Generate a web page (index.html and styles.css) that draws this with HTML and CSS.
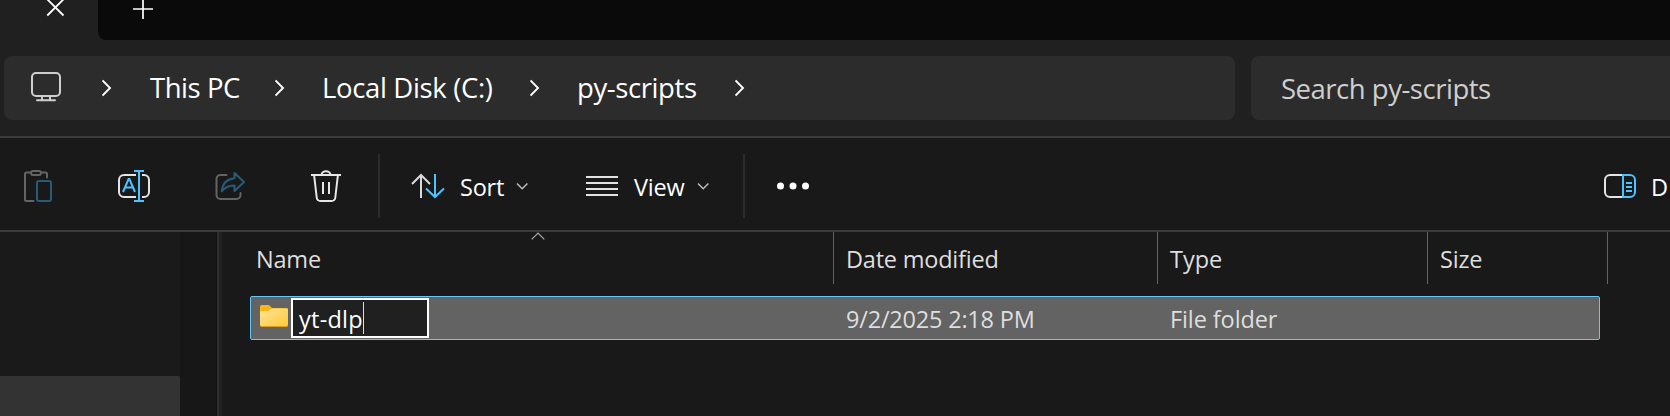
FILE: index.html
```html
<!DOCTYPE html>
<html lang="en">
<head>
<meta charset="utf-8">
<title>py-scripts</title>
<link rel="stylesheet" href="styles.css">
</head>
<body>
<div class="explorer">
  <div class="tabs">
    <div class="tab-active">
      <svg class="icon" width="98" height="40" viewBox="0 0 98 40"><path d="M47.3-.7 63.5 15.5M63.5-.7 47.3 15.5" stroke="#fff" stroke-width="1.8"/></svg>
    </div>
    <div class="tab-strip">
      <svg class="icon" width="90" height="40" viewBox="98 0 90 40"><path d="M133 9h20M143-1v20" stroke="#fff" stroke-width="1.7"/></svg>
    </div>
  </div>
  <div class="navigation">
    <div class="address">
      <svg class="icon" width="71" height="64" viewBox="31 56 71 64"><g fill="none" stroke="#cfcfcf" stroke-width="2" stroke-linecap="round"><rect x="32" y="73" width="28" height="23" rx="4"/><path d="M42 96v4M50 96v4M37 100.3h18"/></g></svg>
      <svg class="icon crumb-arrow" viewBox="0 0 14 64"><path d="M.5 24.500l7.500 7.500-7.500 7.500"/></svg>
      <span class="crumb pc">This PC</span>
      <svg class="icon crumb-arrow" viewBox="0 0 14 64"><path d="M.5 24.500l7.500 7.500-7.500 7.500"/></svg>
      <span class="crumb disk">Local Disk (C:)</span>
      <svg class="icon crumb-arrow" viewBox="0 0 14 64"><path d="M.5 24.500l7.500 7.500-7.500 7.500"/></svg>
      <span class="crumb folder">py-scripts</span>
      <svg class="icon crumb-arrow" viewBox="0 0 14 64"><path d="M.5 24.500l7.500 7.500-7.500 7.500"/></svg>
    </div>
    <div class="search"><span>Search py-scripts</span></div>
  </div>
  <div class="toolbar">
    <div class="file-actions">
      <svg class="icon" width="30" height="92" viewBox="23 138 30 92"><g fill="none" stroke="#646464" stroke-width="2" stroke-linecap="round"><path d="M30 172.500h-3.500a1.500 1.500 0 0 0-1.500 1.500v25.500a1.500 1.500 0 0 0 1.500 1.500h7M42 172.500h3.500a1.500 1.500 0 0 1 1.500 1.500v3.500"/><rect x="31" y="171" width="10" height="4" rx="2"/><rect x="37" y="181" width="14" height="20" rx="2" stroke="#285b78"/></g></svg>
      <svg class="icon" width="34" height="92" viewBox="117 138 34 92"><g fill="none" stroke="#e4e4e4" stroke-width="2"><path d="M136 175h-12a5 5 0 0 0-5 5v12a5 5 0 0 0 5 5h12M142 175h2a5 5 0 0 1 5 5v12a5 5 0 0 1-5 5h-2"/><path d="M134 171h10M139 171v30M134 201h10M123 192l5.600-13h.8l5.600 13M125 187.500h8" stroke="#4cc2ff"/></g></svg>
      <svg class="icon" width="32" height="92" viewBox="214.500 138 32 92"><g fill="none" stroke-width="2" stroke-linecap="round" stroke-linejoin="round"><path d="M227 175h-6a4 4 0 0 0-4 4v16a4 4 0 0 0 4 4h16a4 4 0 0 0 4-4v-2" stroke="#646464"/><path d="M235 173l9.500 9-9.500 9v-5.500c-6 0-9.500 1.300-12.800 6C223 184 227.500 179 235 178.300z" stroke="#285b78"/></g></svg>
      <svg class="icon" width="32" height="92" viewBox="310 138 32 92"><g fill="none" stroke="#e8e8e8" stroke-width="2"><path d="M311 175h30M321.500 175c0-5 9-5 9 0M314.200 176l2.500 21.500a4 4 0 0 0 4 3.500h10.600a4 4 0 0 0 4-3.500l2.500-21.500M323 182v12M329 182v12"/></g></svg>
    </div>
    <div class="divider"></div>
    <div class="sort">
      <svg class="icon" width="34" height="92" viewBox="411 138 34 92"><g fill="none" stroke-width="2"><path d="M421 198v-23M412 184l9-9 9 9" stroke="#dadada"/><path d="M435 174v23M426 188.500l9 8.500 9-8.500" stroke="#4cc2ff"/></g></svg>
      <span class="label">Sort</span>
      <svg class="icon" width="14" height="92" viewBox="516 138 14 92"><path d="M517 183.500l5.200 5.200 5.200-5.200" fill="none" stroke="#bdbdbd" stroke-width="1.500"/></svg>
    </div>
    <div class="view">
      <svg class="icon" width="34" height="92" viewBox="585 138 34 92"><path d="M586 177h32M586 183h32M586 189h32M586 195h32" stroke="#e2e2e2" stroke-width="2"/></svg>
      <span class="label">View</span>
      <svg class="icon" width="14" height="92" viewBox="697 138 14 92"><path d="M698 183.500l5.200 5.200 5.200-5.200" fill="none" stroke="#bdbdbd" stroke-width="1.500"/></svg>
    </div>
    <div class="divider"></div>
    <svg class="icon more" width="36" height="92" viewBox="776 138 36 92"><g fill="#fff"><circle cx="780.500" cy="186" r="3.500"/><circle cx="793" cy="186" r="3.500"/><circle cx="805.500" cy="186" r="3.500"/></g></svg>
    <div class="details">
      <svg class="icon" width="34" height="92" viewBox="1603 138 34 92"><g fill="none" stroke-width="2"><path d="M1623 175h-13a5 5 0 0 0-5 5v12a5 5 0 0 0 5 5h13" stroke="#e4e4e4"/><path d="M1623 174v24M1623 175h7a5 5 0 0 1 5 5v12a5 5 0 0 1-5 5h-7M1626 183h6M1626 187h6M1626 191h6" stroke="#4cc2ff"/></g></svg>
      <span class="label">D</span>
    </div>
  </div>
  <div class="content">
    <div class="tree"><div class="tree-selected"></div></div>
    <div class="gutter"></div>
    <div class="splitter"></div>
    <div class="files">
      <div class="headers">
        <div class="header"><span class="name">Name</span><svg class="sort-mark" width="14" height="8" viewBox="0 0 14 8"><path d="M.7 7.300 7 1l6.300 6.300" fill="none" stroke="#aaa" stroke-width="1.200"/></svg></div>
        <div class="header"><span class="modified">Date modified</span></div>
        <div class="header"><span class="type">Type</span></div>
        <div class="header"><span class="size">Size</span></div>
      </div>
      <div class="row">
        <div class="row-name">
          <svg class="icon" width="28" height="42" viewBox="260 297 28 42"><defs><linearGradient id="folder" x1="0" y1="0" x2="1" y2="1"><stop offset="0" stop-color="#ffe59a"/><stop offset="1" stop-color="#ffc938"/></linearGradient></defs><path d="M260 313v-6.500q0-1.500 1.500-1.500h7.500l3 3h14.500q1.500 0 1.500 1.500v4z" fill="#f9b416"/><path d="M260 312q0-1 1-1h7.500l3-2.500H287q1 0 1 1V325q0 1-1 1h-26q-1 0-1-1z" fill="url(#folder)"/><path d="M260.500 326.500h27" stroke="#d69d22"/></svg>
          <div class="rename"><span>yt-dlp</span><i class="caret"></i></div>
        </div>
        <span class="date-value">9/2/2025 2:18 PM</span>
        <span class="type-value">File folder</span>
      </div>
    </div>
  </div>
</div>
</body>
</html>
```
FILE: styles.css
```css
* { box-sizing: border-box; }
body { margin: 0; background: #191919; color: #fff; font: 23.500px/30px "Open Sans", "Noto Sans", sans-serif; }
.explorer { width: 1670px; height: 416px; overflow: hidden; display: flex; flex-direction: column; white-space: nowrap; }
.icon { display: block; flex: none; }
.tabs { display: flex; height: 40px; background: #202020; }
.tab-active { width: 98px; }
.tab-strip { flex: 1; background: #0a0a0a; border-bottom-left-radius: 8px; }
.navigation { display: flex; gap: 16px; height: 98px; padding: 16px 0 16px 4px; background: #202020; border-bottom: 2px solid #3b3b3b; }
.address { width: 1231px; height: 64px; padding-left: 27px; display: grid; grid-template-columns: 71px 48px 125px 47px 208px 47px 158px 48px; border-radius: 8px; background: #2c2c2c; }
.crumb-arrow { width: 14px; height: 64px; fill: none; stroke: #fff; stroke-width: 1.900px; }
.crumb, .search { font-size: 27.500px; line-height: 64px; }
.pc { letter-spacing: -.450px; }
.disk { letter-spacing: -.350px; }
.folder { letter-spacing: -.400px; }
.search { flex: 1; padding: 1px 0 0 30px; border-radius: 8px 0 0 8px; background: #2c2c2c; color: #cfcfcf; letter-spacing: -.480px; }
.toolbar { display: flex; height: 94px; border-bottom: 2px solid #3b3b3b; }
.file-actions { display: flex; justify-content: space-between; width: 319px; margin: 0 36px 0 23px; }
.divider { width: 2px; height: 64px; margin-top: 16px; background: #2c2c2c; }
.label { line-height: 92px; padding-top: 3px; height: 92px; letter-spacing: -.200px; }
.sort, .view, .details { display: flex; }
.sort { width: 174px; margin-left: 31px; }
.view { width: 158px; }
.sort .label { width: 56px; margin-left: 15px; }
.view .label { width: 63px; margin-left: 15px; }
.more { margin-left: 31px; }
.details { margin-left: auto; width: 67px; }
.details .label { margin-left: 14px; }
.content { display: flex; flex: 1; }
.tree { width: 180px; display: flex; flex-direction: column; justify-content: flex-end; background: #1a1a1a; }
.tree-selected { height: 40px; background: #333; border-top-right-radius: 2px; }
.gutter { width: 36px; background: #171717; }
.splitter { width: 6px; background: linear-gradient(90deg, #111 1px, #2e2e2e 1px 3px, #212121 3px); }
.files { flex: 1; }
.headers { display: grid; grid-template-columns: 612px 324px 270px 180px; height: 52px; color: #dedede; }
.header { position: relative; padding: 12px 0 0 12px; border-right: 1px solid #636363; }
.header:first-child { padding-left: 33px; }
.name, .size { letter-spacing: -.200px; }
.name { margin-left: 1px; }
.modified { letter-spacing: -.220px; }
.sort-mark { position: absolute; left: 309px; top: 0; }
.row { display: grid; grid-template-columns: 595px 324px 1fr; width: 1350px; height: 44px; margin: 12px 0 0 28px; border: 1px solid #60c8fa; border-radius: 2px; background: #636363; color: #dedede; line-height: 44px; }
.date-value { letter-spacing: -.200px; }
.type-value { letter-spacing: -.100px; }
.row-name { display: flex; padding: 0 0 0 9px; }
.rename { display: flex; width: 138px; height: 40px; margin: 1px 0 0 3px; padding-left: 6px; border: 2px solid #fff; background: #202020; color: #fff; line-height: 38px; letter-spacing: .250px; }
.caret { width: 1px; height: 32px; margin-top: 2px; background: #ddd; }
.rename span { width: 64px; }
```
